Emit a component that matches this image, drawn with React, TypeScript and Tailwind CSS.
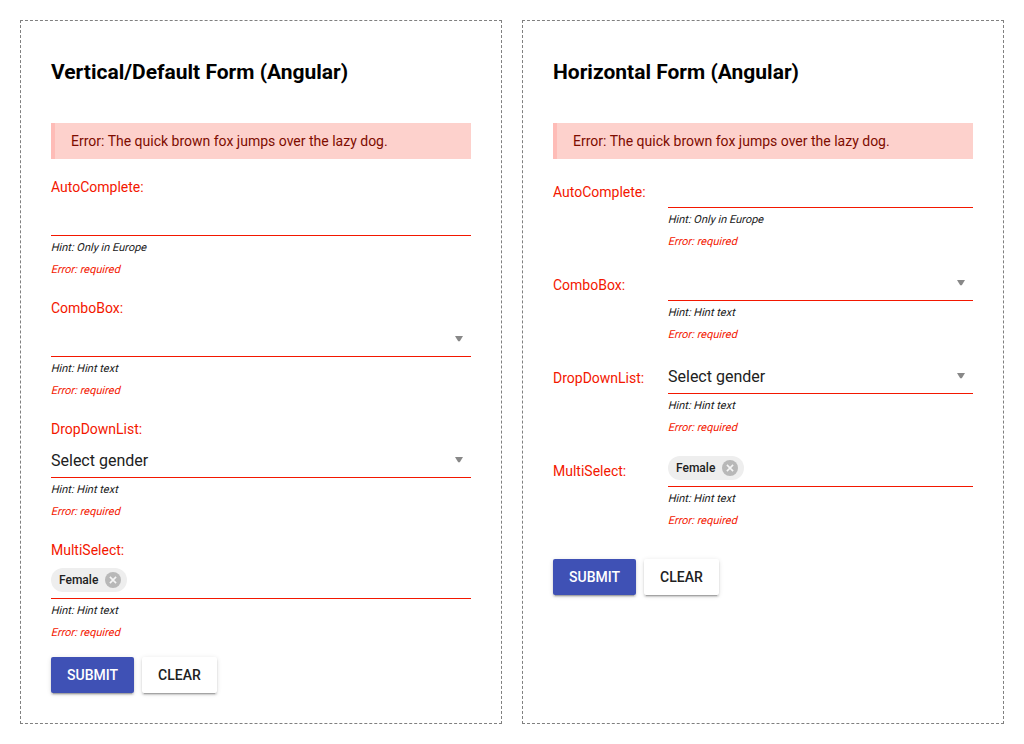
import type { ReactNode } from "react";

interface FieldData {
  label: string;
  hint: string;
  control: ReactNode;
}

function Arrow() {
  return (
    <svg className="mr-2 ml-auto h-[6px] w-2 shrink-0" viewBox="0 0 8 6" aria-hidden="true">
      <path d="M0 0H8L4.8 5.2H3.2Z" fill="#888888" />
    </svg>
  );
}

function Chip({ text }: { text: string }) {
  return (
    <span className="mb-[2px] flex h-6 w-[76px] items-center justify-between rounded-full bg-[#eeeeee] pr-[6px] pl-2 text-[12px] leading-[24px] font-medium text-[#212121]">
      {text}
      <svg className="h-4 w-4" viewBox="0 0 16 16" aria-hidden="true">
        <circle cx="8" cy="8" r="8" fill="#b8b8b8" />
        <path d="M4.9 4.9L11.1 11.1M11.1 4.9L4.9 11.1" stroke="#f5f5f5" strokeWidth="1.6" />
      </svg>
    </span>
  );
}

const fields: FieldData[] = [
  { label: "AutoComplete:", hint: "Hint: Only in Europe", control: null },
  { label: "ComboBox:", hint: "Hint: Hint text", control: <Arrow /> },
  {
    label: "DropDownList:",
    hint: "Hint: Hint text",
    control: (
      <>
        <span className="mt-0.5 text-base leading-6 text-[#212121]">Select gender</span>
        <Arrow />
      </>
    ),
  },
  { label: "MultiSelect:", hint: "Hint: Hint text", control: <Chip text="Female" /> },
];

function Field({ field, horizontal }: { field: FieldData; horizontal: boolean }) {
  return (
    <div className={horizontal ? "flex" : "flex flex-col"}>
      <label
        className={
          horizontal
            ? "w-[115px] shrink-0 pt-[13px] text-sm leading-5 text-[#f31700]"
            : "text-sm leading-5 text-[#f31700]"
        }
      >
        {field.label}
      </label>
      <div className="min-w-0 grow">
        <div className="flex h-[39px] items-center border-b border-[#f31700] pt-1">{field.control}</div>
        <div className="h-[22px] origin-[0_14px] -skew-x-[14deg] pt-px text-[11px] leading-[22px] text-[#212121]">
          {field.hint}
        </div>
        <div className="h-[22px] origin-[0_14px] -skew-x-[14deg] pt-px text-[11px] leading-[22px] text-[#f31700]">
          Error: required
        </div>
      </div>
    </div>
  );
}

const buttonShadow =
  "shadow-[0_3px_1px_-2px_rgba(0,0,0,0.2),0_2px_2px_0_rgba(0,0,0,0.14),0_1px_5px_0_rgba(0,0,0,0.12)]";

function Panel({ title, horizontal = false }: { title: string; horizontal?: boolean }) {
  return (
    <section className="h-[704px] w-[482px] border border-dashed border-[#808080] px-[30px] pt-[38px]">
      <h3 className="text-[21px] leading-[26px] font-bold text-black">{title}</h3>
      <div className="mt-[38px] border-l-4 border-[#febcb7] bg-[#fdd1cc] px-4 py-2 text-sm leading-5 text-[#7e0c00]">
        Error: The quick brown fox jumps over the lazy dog.
      </div>
      <form onSubmit={(e) => e.preventDefault()}>
        <div className={horizontal ? "flex flex-col gap-[10px] pt-[10px]" : "flex flex-col gap-[18px] pt-[18px]"}>
          {fields.map((field) => (
            <Field key={field.label} field={field} horizontal={horizontal} />
          ))}
        </div>
        <div className={horizontal ? "mt-7 flex gap-2" : "mt-[14px] flex gap-2"}>
          <button
            className={`h-9 rounded-xs bg-[#3f51b5] px-4 text-sm leading-5 font-medium text-white ${buttonShadow}`}
          >
            SUBMIT
          </button>
          <button
            type="button"
            className={`h-9 rounded-xs bg-white px-4 text-sm leading-5 font-medium text-[#212121] ${buttonShadow}`}
          >
            CLEAR
          </button>
        </div>
      </form>
    </section>
  );
}

export default function App() {
  return (
    <main className="flex h-[744px] w-[1024px] gap-5 bg-white p-5 font-[Roboto,sans-serif]">
      <Panel title="Vertical/Default Form (Angular)" />
      <Panel title="Horizontal Form (Angular)" horizontal />
    </main>
  );
}
